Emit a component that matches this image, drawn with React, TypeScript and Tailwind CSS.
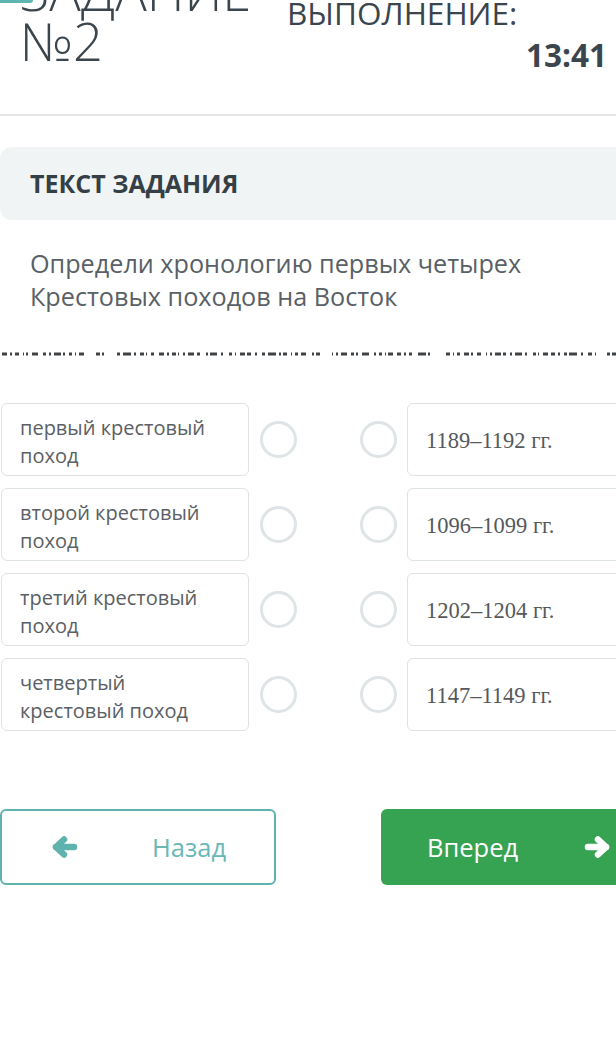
import React from "react";

const dashSegs: [number, number][] = (() => {
  const segs: [number, number][] = [];
  const pattern = [5, 2, 4, 1, 2, 6, 3, 2, 7, 2, 3, 1, 5, 4, 2, 3, 8, 2, 4, 1, 3];
  const gaps = [3, 3, 4, 2, 4, 5, 3, 3, 2, 4, 3, 3, 6, 2, 4];
  const bigGaps: [number, number][] = [
    [88, 96],
    [103, 117],
    [224, 229],
    [320, 332],
    [432, 446],
    [598, 607],
  ];
  let x = 2;
  let i = 0;
  while (x < 616) {
    const w = pattern[i % pattern.length];
    const g = gaps[i % gaps.length];
    const big = bigGaps.find(([a, b]) => x >= a && x < b);
    if (big) {
      x = big[1];
      continue;
    }
    segs.push([x, Math.min(w, 616 - x)]);
    x += w + g;
    i++;
  }
  return segs;
})();

function Dashes() {
  return (
    <svg width="616" height="4" viewBox="0 0 616 4" className="block">
      {dashSegs.map(([x, w], k) => (
        <rect key={k} x={x} y={0.5} width={w} height={3} fill="#3f4346" />
      ))}
    </svg>
  );
}

function Arrow({ dir, color }: { dir: "left" | "right"; color: string }) {
  return (
    <svg width="27" height="22" viewBox="0 0 27 22" className={dir === "right" ? "-scale-x-100" : ""}>
      <g stroke={color} strokeWidth="6.5" strokeLinecap="round" strokeLinejoin="round" fill="none">
        <line x1="5" y1="11" x2="23" y2="11" />
        <polyline points="13,3.5 5,11 13,18.5" />
      </g>
    </svg>
  );
}

const leftItems = [
  "первый крестовый поход",
  "второй крестовый поход",
  "третий крестовый поход",
  "четвертый крестовый поход",
];
const rightItems = ["1189–1192 гг.", "1096–1099 гг.", "1202–1204 гг.", "1147–1149 гг."];

function Row({ left, right }: { left: string; right: string }) {
  return (
    <div className="flex items-center h-[73px] w-[900px]">
      <div className="ml-[1px] w-[248px] shrink-0 h-full border-[1.5px] border-[#dde2e5] rounded-[6px] flex items-center pl-[18px] pr-[24px] pt-[4px] text-[20px] leading-[28px] text-[#5b6064]">
        {left}
      </div>
      <div className="ml-[11px] shrink-0 w-[37px] h-[37px] rounded-full border-[3px] border-[#dfe4e7]" />
      <div className="ml-[63px] shrink-0 w-[37px] h-[37px] rounded-full border-[3px] border-[#dfe4e7]" />
      <div className="ml-[10px] w-[240px] shrink-0 h-full border-[1.5px] border-[#dde2e5] rounded-[6px] flex items-center pl-[18px] pt-[2px] text-[22.5px] text-[#55595c] font-['Liberation_Serif',serif]">
        {right}
      </div>
    </div>
  );
}

export default function App() {
  return (
    <div className="w-[616px] h-[1060px] bg-white overflow-hidden relative font-['Open_Sans',sans-serif]">
      {/* header */}
      <div className="relative h-[116px] border-b-2 border-[#e3e5e6] flex overflow-hidden">
        <div className="absolute left-0 top-0 w-[33px] h-[3px] bg-[#5fb5b0] rounded-br-[3px] z-10" />
        <div className="w-[287px] shrink-0 pl-[20px] -mt-[34px] text-[52.5px] leading-[50px] font-light text-[#3a454d] whitespace-nowrap">
          ЗАДАНИЕ
          <br />
          №2
        </div>
        <div className="flex-1 flex flex-col text-[#3a454d]">
          <div className="-mt-[5px] text-[31.5px] leading-[36px] whitespace-nowrap">ВЫПОЛНЕНИЕ:</div>
          <div className="mt-[4px] pr-[9px] text-right text-[31.5px] leading-[40px] font-bold">13:41</div>
        </div>
      </div>

      {/* task title box */}
      <div className="mt-[31px] h-[73px] bg-[#f0f4f5] rounded-l-[12px] flex items-center pl-[30px]">
        <span className="text-[25px] font-bold text-[#353f46]">ТЕКСТ ЗАДАНИЯ</span>
      </div>

      {/* question */}
      <div className="mt-[27px] pl-[30px] pr-[20px] text-[25.2px] leading-[33px] text-[#596066] whitespace-nowrap">
        Определи хронологию первых четырех
        <br />
        Крестовых походов на Восток
      </div>

      {/* dashes */}
      <div className="mt-[39px]">
        <Dashes />
      </div>

      {/* rows */}
      <div className="mt-[47px] flex flex-col gap-[12px]">
        {leftItems.map((l, i) => (
          <Row key={i} left={l} right={rightItems[i]} />
        ))}
      </div>

      {/* buttons */}
      <div className="mt-[78px] flex w-[900px]">
        <div className="w-[276px] shrink-0 h-[76px] border-2 border-[#5fb3ae] rounded-[6px] flex items-center">
          <div className="ml-[49px]">
            <Arrow dir="left" color="#5fb3ae" />
          </div>
          <span className="ml-[74px] text-[25.5px] text-[#6ab8b4]">Назад</span>
        </div>
        <div className="ml-[105px] w-[260px] shrink-0 h-[76px] bg-[#36a352] rounded-[6px] flex items-center">
          <span className="ml-[46px] text-[25.5px] text-white">Вперед</span>
          <div className="ml-[66px]">
            <Arrow dir="right" color="#ffffff" />
          </div>
        </div>
      </div>
    </div>
  );
}
